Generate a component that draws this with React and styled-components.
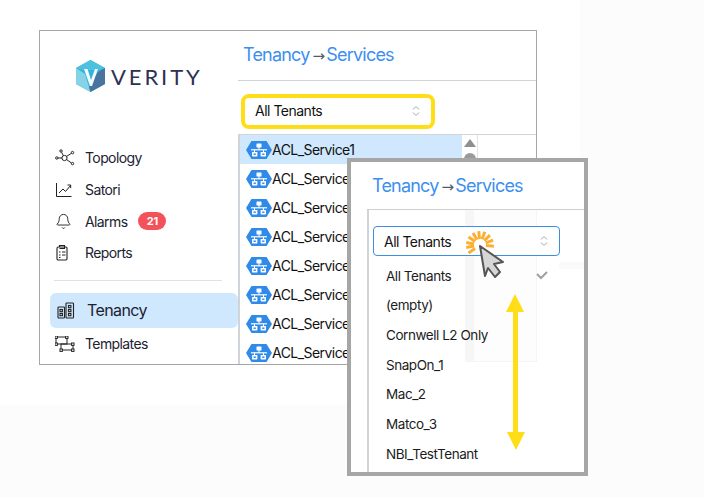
import * as React from "react";
import styled, { createGlobalStyle } from "styled-components";
import { Bell } from "lucide-react";

const GlobalStyle = createGlobalStyle`
  html, body {
    margin: 0;
    padding: 0;
    background: #fcfcfc;
    font-family: Inter, "Liberation Sans", sans-serif;
  }
  * { box-sizing: border-box; }
`;

const Stage = styled.div`
  position: relative;
  width: 704px;
  height: 497px;
  overflow: hidden;
`;

const Sheet = styled.div`
  width: 580px;
  height: 405px;
  background: #fff;
  padding: 30px 0 0 39px;
`;

const Card = styled.div`
  display: flex;
  width: 498px;
  height: 335px;
  border: 1px solid #a6a6a6;
  overflow: hidden;
  background: #fff;
`;

const Sidebar = styled.aside`
  flex: 0 0 198px;
  display: flex;
  flex-direction: column;
  padding: 29px 0 0 10px;
`;

const Logo = styled.div`
  display: flex;
  align-items: center;
  gap: 6px;
  height: 32px;
  margin: 0 0 50px 26px;
`;

const LogoWord = styled.span`
  font-family: Lato, sans-serif;
  font-size: 22px;
  font-weight: 400;
  letter-spacing: 2.9px;
  color: #2e3054;
`;

const NavItem = styled.div`
  display: flex;
  align-items: center;
  height: ${(p) => (p.$active ? "35px" : "31.7px")};
  width: 188px;
  padding-left: ${(p) => (p.$active ? "7px" : "5px")};
  border-radius: 6px;
  background: ${(p) => (p.$active ? "#cfe8fd" : "transparent")};
  color: #1b2230;
  font-size: ${(p) => (p.$active ? "16px" : "14px")};
  letter-spacing: -0.6px;
`;

const NavIcon = styled.span`
  flex: 0 0 30px;
  display: flex;
  align-items: center;
`;

const Badge = styled.span`
  margin-left: 11px;
  width: 28px;
  height: 18px;
  border-radius: 9px;
  background: #f4525a;
  color: #fff;
  font-size: 11px;
  font-weight: 700;
  line-height: 18px;
  letter-spacing: 0;
  text-align: center;
`;

const Divider = styled.div`
  width: 168px;
  height: 1px;
  margin: 11px 0 12px 4px;
  background: #dfe1e4;
`;

const Main = styled.main`
  flex: 1;
  display: flex;
  flex-direction: column;
  min-width: 0;
`;

const Crumb = styled.div`
  font-size: 18px;
  color: #3d8fef;
  letter-spacing: -0.8px;
  white-space: nowrap;
  height: ${(p) => (p.$overlay ? "47px" : "49px")};
  padding: ${(p) => (p.$overlay ? "13px 0 0 21px" : "13px 0 0 5px")};
  line-height: 22px;
`;

const Arrow = styled.span`
  margin: 0 2px 0 3px;
  color: #555b66;
  font-family: "DejaVu Sans", sans-serif;
  font-size: 15px;
`;

const Panel = styled.div`
  flex: 1;
  min-height: 0;
  display: flex;
  flex-direction: column;
  border-top: 1px solid #ced4da;
`;

const SelectZone = styled.div`
  flex: 0 0 54px;
  padding: 13px 0 0 3px;
  border-bottom: 1px solid #ced4da;
`;

const HighlightSelect = styled.div`
  display: flex;
  align-items: center;
  justify-content: space-between;
  width: 194px;
  height: 35px;
  border: 4px solid #ffde17;
  border-radius: 8px;
  padding: 0 11px 2px 10px;
  font-size: 14px;
  letter-spacing: -0.5px;
  color: #111;
`;

const ListArea = styled.div`
  flex: 1;
  min-height: 0;
  display: flex;
  border-left: 2px solid #ced4da;
`;

const Rows = styled.div`
  flex: 0 0 222px;
`;

const Row = styled.div`
  display: flex;
  align-items: center;
  height: 29px;
  padding-left: 6px;
  font-size: 14px;
  letter-spacing: -0.55px;
  color: #111;
  background: ${(p) => (p.$selected ? "#cfe8fd" : "transparent")};
`;

const ScrollTrack = styled.div`
  flex: 0 0 16px;
  display: flex;
  flex-direction: column;
  align-items: center;
  padding-top: 4px;
  border-right: 1px solid #e4e4e4;
`;

const ScrollUp = styled.div`
  width: 0;
  height: 0;
  border-left: 6px solid transparent;
  border-right: 6px solid transparent;
  border-bottom: 8px solid #8f8f8f;
`;

const ScrollThumb = styled.div`
  width: 12px;
  height: 120px;
  margin-top: 6px;
  border-radius: 6px;
  background: #9a9a9a;
`;

/* Zoomed-in inset that sits over the screenshot */
const Inset = styled.section`
  position: absolute;
  left: 347px;
  top: 158px;
  width: 241px;
  height: 318px;
  border: 4px solid #a6a6a6;
  background: #fff;
  display: flex;
  flex-direction: column;
`;

const InsetPanel = styled.div`
  position: relative;
  flex: 1;
  margin-left: 16px;
  padding: 16px 0 0 4px;
  border-top: 1px solid #cfcfcf;
  border-left: 2px solid #ced4da;
`;

const GhostColumn = styled.div`
  position: absolute;
  left: ${(p) => p.$left}px;
  top: 0;
  width: ${(p) => p.$width}px;
  height: 152px;
  background: ${(p) => p.$bg};
  border-right: ${(p) => (p.$line ? "1px solid #f5f5f5" : "none")};
  border-bottom: ${(p) => (p.$line ? "1px solid #f5f5f5" : "none")};
`;

const GhostBand = styled.div`
  position: absolute;
  left: 190px;
  top: 52px;
  right: 0;
  height: 7px;
  background: #fafafa;
`;

const OpenSelect = styled.div`
  position: relative;
  display: flex;
  align-items: center;
  justify-content: space-between;
  width: 187px;
  height: 30px;
  border: 1px solid #3d8fe0;
  border-radius: 4px;
  padding: 0 11px 0 10px;
  background: #fff;
  font-size: 14px;
  letter-spacing: -0.5px;
  color: #111;
`;

const Options = styled.div`
  position: relative;
  margin-top: 5px;
`;

const Option = styled.div`
  display: flex;
  align-items: center;
  height: 29.65px;
  padding-left: 13px;
  font-size: 13.5px;
  letter-spacing: -0.45px;
  color: #1c1c1c;
`;

const Check = styled.svg`
  position: absolute;
  left: 163px;
  top: 10px;
`;

const Overlay = styled.svg`
  position: absolute;
  left: 0;
  top: 0;
  pointer-events: none;
`;

const Chevrons = () => (
  <svg width="8" height="12" viewBox="0 0 8 12" fill="none" stroke="#a4a9ae" strokeWidth="1">
    <polyline points="1,4.5 4,1.5 7,4.5" />
    <polyline points="1,7.5 4,10.5 7,7.5" />
  </svg>
);

const LogoMark = () => (
  <svg width="29" height="32" viewBox="0 0 29 32">
    <polygon points="14.5,0 29,8 29,24 14.5,32 0,24 0,8" fill="#35b4d9" />
    <polygon points="0,8 9,14 14.5,32 0,24" fill="#86d3e8" />
    <polygon points="29,8 29,24 14.5,32 13,27 22,12" fill="#4b739f" />
    <polygon points="14.5,0 29,8 22,10 7,10 0,8" fill="#4fc0e0" />
    <polygon points="8,9 11.5,9 15,20 19,9 22,9 16,26 14,26" fill="#f4fbfd" />
  </svg>
);

const ServiceIcon = () => (
  <svg width="26" height="18" viewBox="0 0 26 18">
    <polygon points="5.5,0 20.5,0 26,9 20.5,18 5.5,18 0,9" fill="#2f8ae8" />
    <g fill="#fff">
      <rect x="10.5" y="2.5" width="5" height="4" rx="0.6" />
      <rect x="12.5" y="6" width="1" height="2.5" />
      <rect x="5" y="8.2" width="16" height="1.2" />
      <rect x="8" y="9" width="1" height="2" />
      <rect x="17" y="9" width="1" height="2" />
      <rect x="6" y="11" width="5.4" height="4.4" rx="0.6" />
      <rect x="14.6" y="11" width="5.4" height="4.4" rx="0.6" />
    </g>
    <g fill="#2f8ae8">
      <rect x="7.5" y="12.5" width="2.4" height="1.4" />
      <rect x="16.1" y="12.5" width="2.4" height="1.4" />
    </g>
  </svg>
);

const TopologyIcon = () => (
  <svg width="20" height="18" viewBox="0 0 20 18" fill="none" stroke="#222" strokeWidth="1">
    <circle cx="9.5" cy="9" r="2.6" />
    <circle cx="1.8" cy="9" r="1.2" />
    <circle cx="6" cy="2" r="1.2" />
    <circle cx="17.5" cy="3.6" r="1.2" />
    <circle cx="17.5" cy="14.6" r="1.2" />
    <path d="M3 9h4M6.6 3.2l1.7 3.4M16.4 4.3l-4.8 3.1M16.4 13.9l-4.8-3.3" />
  </svg>
);

const SatoriIcon = () => (
  <svg width="18" height="16" viewBox="0 0 18 16" fill="none" stroke="#222" strokeWidth="1">
    <path d="M1.5 1v13.5h15" />
    <path d="M4 11l4-4 2.5 2.5L15.5 3.5" />
    <path d="M12.5 3h3.2v3.2" />
  </svg>
);

const ReportsIcon = () => (
  <svg width="14" height="17" viewBox="0 0 14 17" fill="none" stroke="#222" strokeWidth="1.1">
    <rect x="2" y="3" width="10" height="13" rx="1.2" />
    <path d="M4.5 3V1.5h5V3M4.5 4.5h5V3" />
    <path d="M4 8h1.5M7 8h3.5M4 11h1.5M7 11h3.5M4 13.5h1.5" />
  </svg>
);

const TenancyIcon = () => (
  <svg width="18" height="17" viewBox="0 0 18 17" fill="none" stroke="#222" strokeWidth="1.1">
    <rect x="1" y="5" width="6.5" height="11" rx="0.8" />
    <rect x="9" y="1" width="7.5" height="15" rx="0.8" />
    <rect x="3" y="7.5" width="2.4" height="2.2" />
    <rect x="3" y="11.5" width="2.4" height="2.2" />
    <rect x="11.5" y="3.5" width="2.4" height="2.2" />
    <rect x="11.5" y="7.5" width="2.4" height="2.2" />
    <rect x="11.5" y="11.5" width="2.4" height="2.2" />
  </svg>
);

const TemplatesIcon = () => (
  <svg width="20" height="16" viewBox="0 0 20 16" fill="none" stroke="#222" strokeWidth="1">
    <rect x="1" y="1" width="11" height="7" />
    <rect x="6" y="8" width="12" height="6" />
    <g fill="#fff">
      <rect x="0" y="0" width="2.4" height="2.4" />
      <rect x="10.6" y="0" width="2.4" height="2.4" />
      <rect x="0" y="7" width="2.4" height="2.4" />
      <rect x="16.6" y="7" width="2.4" height="2.4" />
      <rect x="5" y="13" width="2.4" height="2.4" />
      <rect x="16.6" y="13" width="2.4" height="2.4" />
    </g>
  </svg>
);

const rays = [-170, -145, -120, -95, -70, -45, -20, 5, 170, 145];

const Pointer = () => (
  <Overlay width="704" height="497" viewBox="0 0 704 497">
    <g stroke="#fbb034" strokeWidth="3">
      {rays.map((a) => {
        const r = (a * Math.PI) / 180;
        return (
          <line
            key={a}
            x1={480 + Math.cos(r) * 6}
            y1={245 + Math.sin(r) * 6}
            x2={480 + Math.cos(r) * 14}
            y2={245 + Math.sin(r) * 14}
          />
        );
      })}
    </g>
    <polygon
      points="480,246 503,262 494,264 500,272 495,277 488,268 485,276"
      fill="#d6d6d6"
      stroke="#555"
      strokeWidth="2"
      strokeLinejoin="round"
    />
    <g fill="#ffde17">
      <polygon points="515,294 524,312 506,312" />
      <rect x="513" y="311" width="5" height="122" />
      <polygon points="507,432 525,432 516,450" />
    </g>
  </Overlay>
);

const navItems = [
  { label: "Topology", icon: <TopologyIcon /> },
  { label: "Satori", icon: <SatoriIcon /> },
  { label: "Alarms", icon: <Bell size={17} strokeWidth={1.3} color="#222" />, badge: "21" },
  { label: "Reports", icon: <ReportsIcon /> },
];

const tenants = [
  "All Tenants",
  "(empty)",
  "Cornwell L2 Only",
  "SnapOn_1",
  "Mac_2",
  "Matco_3",
  "NBI_TestTenant",
];

const services = Array.from({ length: 8 }, (_, i) => `ACL_Service${i + 1}`);

const App = () => (
  <Stage>
    <GlobalStyle />
    <Sheet>
      <Card>
        <Sidebar>
          <Logo>
            <LogoMark />
            <LogoWord>VERITY</LogoWord>
          </Logo>
          {navItems.map((item) => (
            <NavItem key={item.label}>
              <NavIcon>{item.icon}</NavIcon>
              {item.label}
              {item.badge && <Badge>{item.badge}</Badge>}
            </NavItem>
          ))}
          <Divider />
          <NavItem $active>
            <NavIcon>
              <TenancyIcon />
            </NavIcon>
            Tenancy
          </NavItem>
          <NavItem>
            <NavIcon>
              <TemplatesIcon />
            </NavIcon>
            Templates
          </NavItem>
        </Sidebar>
        <Main>
          <Crumb>
            Tenancy<Arrow>→</Arrow>Services
          </Crumb>
          <Panel>
            <SelectZone>
              <HighlightSelect>
                All Tenants
                <Chevrons />
              </HighlightSelect>
            </SelectZone>
            <ListArea>
              <Rows>
                {services.map((name, i) => (
                  <Row key={name} $selected={i === 0}>
                    <ServiceIcon />
                    {name}
                  </Row>
                ))}
              </Rows>
              <ScrollTrack>
                <ScrollUp />
                <ScrollThumb />
              </ScrollTrack>
            </ListArea>
          </Panel>
        </Main>
      </Card>
    </Sheet>
    <Inset>
      <Crumb $overlay>
        Tenancy<Arrow>→</Arrow>Services
      </Crumb>
      <InsetPanel>
        <GhostColumn $left={96} $width={9} $bg="#f6f6f6" />
        <GhostColumn $left={105} $width={63} $bg="#fdfdfd" $line />
        <GhostBand />
        <OpenSelect>
          All Tenants
          <Chevrons />
        </OpenSelect>
        <Options>
          {tenants.map((name) => (
            <Option key={name}>{name}</Option>
          ))}
          <Check width="12" height="9" viewBox="0 0 12 9" fill="none" stroke="#a0a0a0" strokeWidth="2">
            <polyline points="1,3 5,7 11,1" />
          </Check>
        </Options>
      </InsetPanel>
    </Inset>
    <Pointer />
  </Stage>
);

export default App;
